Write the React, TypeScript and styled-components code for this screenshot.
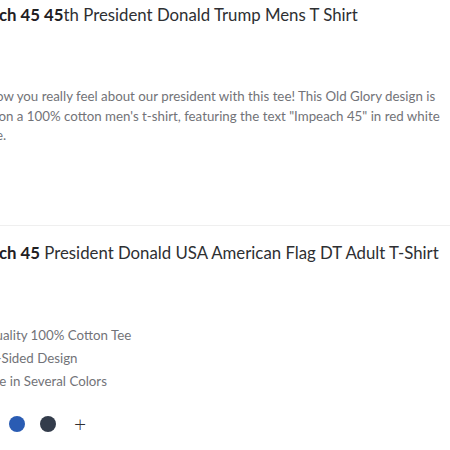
import styled, { createGlobalStyle } from "styled-components";

const GlobalStyle = createGlobalStyle`
  html, body {
    margin: 0;
    padding: 0;
    background: #fff;
    overflow: hidden;
  }
  body {
    font-family: Lato, "Open Sans", sans-serif;
    color: #2e2f32;
  }
`;

const products = [
  {
    id: 1,
    bold: "Impeach 45 45",
    rest: "th President Donald Trump Mens T Shirt",
    description:
      "Show how you really feel about our president with this tee! This Old Glory design is printed on a 100% cotton men's t-shirt, featuring the text \"Impeach 45\" in red white and blue.",
  },
  {
    id: 2,
    bold: "Impeach 45",
    rest: " President Donald USA American Flag DT Adult T-Shirt",
    features: [
      "High Quality 100% Cotton Tee",
      "Double-Sided Design",
      "Available in Several Colors",
    ],
    colors: ["#e8e8e8", "#2a5cb3", "#333c4b"],
  },
];

export default function App() {
  return (
    <>
      <GlobalStyle />
      <List>
        {products.map((p) => (
          <Product key={p.id} $first={p.id === 1}>
            <Title>
              <strong>{p.bold}</strong>
              {p.rest}
            </Title>
            {p.description && <Description>{p.description}</Description>}
            {p.features && (
              <Features>
                {p.features.map((f) => (
                  <li key={f}>{f}</li>
                ))}
              </Features>
            )}
            {p.colors && (
              <Swatches>
                {p.colors.map((c) => (
                  <Swatch key={c} $color={c} />
                ))}
                <More>+</More>
              </Swatches>
            )}
          </Product>
        ))}
      </List>
    </>
  );
}

const List = styled.div`
  margin-left: -47px;
  width: 510px;
`;

const Product = styled.div<{ $first: boolean }>`
  padding: ${(p) => (p.$first ? "3px 0 0" : "15px 0 0")};
  border-top: ${(p) => (p.$first ? "none" : "1px solid #efefef")};
  min-height: ${(p) => (p.$first ? "225px" : "auto")};
  box-sizing: border-box;
`;

const Title = styled.h2`
  margin: 0;
  font-weight: 400;
  font-size: 16.8px;
  line-height: 24px;
  color: #2e2f32;

  strong {
    font-weight: 700;
    color: #1f2023;
  }
`;

const Description = styled.p`
  margin: 60px 0 0;
  width: 495px;
  font-size: 13.3px;
  line-height: 19.5px;
  color: #727378;
`;

const Features = styled.ul`
  list-style: none;
  padding: 0 0 0 1px;
  margin: 59px 0 0;
  font-size: 13.3px;
  line-height: 23px;
  color: #727378;
`;

const Swatches = styled.div`
  display: flex;
  align-items: center;
  gap: 15px;
  margin: 23px 0 0 25px;
`;

const Swatch = styled.span<{ $color: string }>`
  width: 16px;
  height: 16px;
  border-radius: 50%;
  background: ${(p) => p.$color};
`;

const More = styled.span`
  font-size: 21px;
  font-weight: 300;
  line-height: 16px;
  color: #2e2f32;
  margin-left: 3px;
`;
